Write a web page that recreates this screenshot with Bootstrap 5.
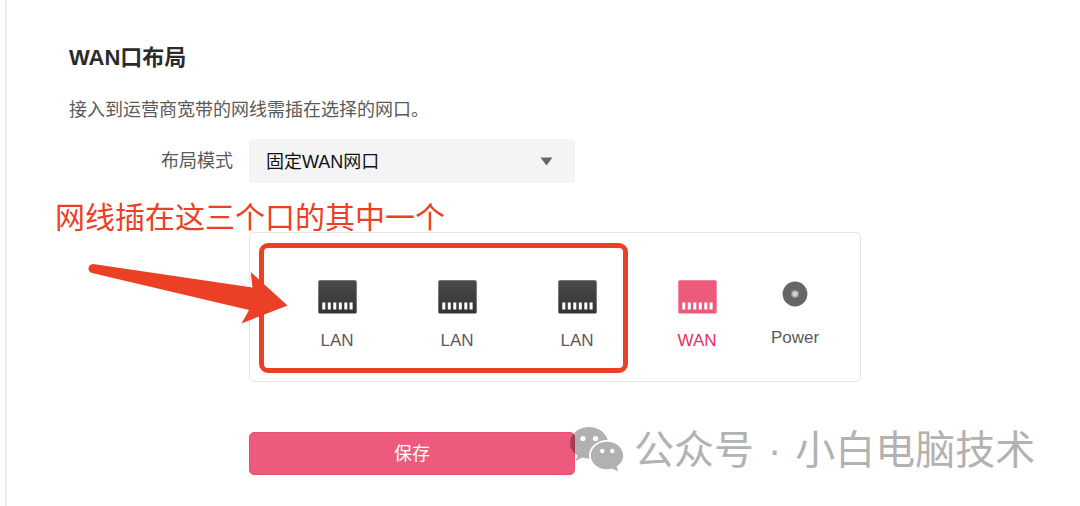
<!DOCTYPE html>
<html lang="zh-CN">
<head>
<meta charset="utf-8">
<meta name="viewport" content="width=device-width, initial-scale=1">
<title>WAN口布局</title>
<link href="https://cdn.jsdelivr.net/npm/bootstrap@5.3.0/dist/css/bootstrap.min.css" rel="stylesheet">
<style>
  body { font-family: "Liberation Sans", "Noto Sans CJK SC", sans-serif; font-size: 18px; line-height: 26px; color: #5a5a5a; background: #fff; }
  .settings { margin-left: 5px; border-left: 2px solid #ededed; padding: 45px 16px 24px 62px; }
  .settings-title { font-size: 22px; line-height: 26px; color: #2b2b2b; margin-bottom: 26px; }
  .settings-hint { margin-bottom: 16px; }
  .field-label { width: 180px; padding-right: 16px; }
  .field-box { width: 326px; }
  .mode-select, .mode-select:focus { appearance: none; height: 44px; padding: 1px 40px 0 17px; font-size: 18px; line-height: 26px; color: #111; background: #f4f4f4; border: 0; border-radius: 4px; }
  .select-caret { right: 22px; top: 18px; }
  .field-body { margin-left: 180px; }
  .port-panel { max-width: 612px; height: 150px; margin-top: 49px; padding: 47px 0 0 27px; border: 1px solid #e4e4e4; border-radius: 5px; }
  .port { width: 120px; font-size: 17px; gap: 14px; }
  .port-wan { color: #e8305f; }
  .port-power { width: 76px; gap: 18px; }
  .save-row { margin-top: 50px; }
  .btn-save, .btn-save:hover { height: 43px; padding: 0; font-size: 18px; line-height: 26px; color: #fff; background: #ec5b7b; border: 1px solid #ea4f73; border-radius: 5px; }
  .note-text { left: -195px; top: -37px; font-size: 30px; line-height: 44px; color: #eb4025; }
  .note-frame { left: 9px; top: 10px; width: 369px; height: 130px; border: 5px solid #eb4025; border-radius: 9px; }
  .note-arrow { left: -163px; top: 28px; }
  .watermark { left: 320px; top: -14px; font-size: 40px; line-height: 60px; color: #b2b2b2; gap: 9px; }
  .watermark-text { gap: 14px; padding-top: 2px; }
</style>
</head>
<body>
<svg width="0" height="0" class="position-absolute" aria-hidden="true">
  <defs>
    <linearGradient id="dark" x1="0" y1="0" x2="0" y2="1"><stop offset="0" stop-color="#4b4b4b"/><stop offset="1" stop-color="#333"/></linearGradient>
    <symbol id="jack" viewBox="0 0 39 34">
      <rect x=".3" y=".3" width="38.4" height="33.2" rx="1.5"/>
      <path fill="#fff" d="M4.300 22.500h3v7h-3zM9.800 22.500h3v7h-3zM15.300 22.500h3v7h-3zM20.800 22.500h3v7h-3zM26.300 22.500h3v7h-3zM31.600 22.500h3v7h-3z"/>
    </symbol>
  </defs>
</svg>
<main class="settings min-vh-100">
  <h1 class="settings-title fw-bold">WAN口布局</h1>
  <p class="settings-hint">接入到运营商宽带的网线需插在选择的网口。</p>
  <form>
    <div class="d-flex align-items-center">
      <label class="field-label text-end flex-shrink-0" for="mode">布局模式</label>
      <div class="field-box position-relative">
        <select id="mode" class="mode-select d-block w-100"><option>固定WAN网口</option></select>
        <svg class="select-caret position-absolute pe-none" width="13" height="9"><path d="M.5.5h12l-6 8z" fill="#666"/></svg>
      </div>
    </div>
    <div class="field-body">
      <div class="port-panel position-relative d-flex align-items-start">
        <div class="port d-flex flex-column align-items-center"><svg width="39" height="34" fill="url(#dark)"><use href="#jack"/></svg><span>LAN</span></div>
        <div class="port d-flex flex-column align-items-center"><svg width="39" height="34" fill="url(#dark)"><use href="#jack"/></svg><span>LAN</span></div>
        <div class="port d-flex flex-column align-items-center"><svg width="39" height="34" fill="url(#dark)"><use href="#jack"/></svg><span>LAN</span></div>
        <div class="port port-wan d-flex flex-column align-items-center"><svg width="39" height="34" fill="#ec5b7b"><use href="#jack"/></svg><span>WAN</span></div>
        <div class="port port-power d-flex flex-column align-items-center"><svg width="26" height="27"><circle cx="13" cy="14" r="12.4" fill="#666"/><circle cx="13" cy="14" r="4" fill="#929292"/><circle cx="13" cy="14" r="2.7" fill="#d0d0d0"/></svg><span>Power</span></div>
        <div class="note-frame position-absolute pe-none"></div>
        <svg class="note-arrow position-absolute pe-none" width="204" height="66" viewBox="0 0 204 66"><path fill="#eb4025" d="M6 3 165.500 26.500 163.700 11 200.500 44.500 154.500 62.500 162 49 5 12Q1 10.500 1.500 7T6 3Z"/></svg>
        <div class="note-text position-absolute text-nowrap">网线插在这三个口的其中一个</div>
      </div>
      <div class="save-row position-relative">
        <div class="field-box"><button type="button" class="btn btn-save d-block w-100">保存</button></div>
        <div class="watermark position-absolute d-flex align-items-center text-nowrap pe-none">
          <svg width="56" height="48" viewBox="0 0 56 48">
            <mask id="cut"><rect width="56" height="48" fill="#fff"/><ellipse cx="38" cy="30.500" rx="18" ry="15.500"/><circle cx="14" cy="13.500" r="2.600"/><circle cx="26.500" cy="13.500" r="2.600"/></mask>
            <g fill="#000" opacity=".3">
              <path mask="url(#cut)" d="M20 2C9.500 2 1 9 1 18c0 5.500 3 9.500 7.500 12.500L6.500 36l7-3.500c2 .7 4.500 1 6.500 1 10.500 0 19-7 19-15.500S30.500 2 20 2Z"/>
              <path fill-rule="evenodd" d="M38 16.700c-9 0-16.200 6.100-16.200 13.800S29 44.300 38 44.300c2 0 3.800-.3 5.500-.8l5.500 3-1.300-5.200c4-2.700 6.500-6.300 6.500-10.800 0-7.700-7.200-13.800-16.200-13.800ZM33.300 23.800a2.200 2.200 0 1 1 0 4.400 2.200 2.200 0 0 1 0-4.400ZM43.300 23.800a2.200 2.200 0 1 1 0 4.400 2.200 2.200 0 0 1 0-4.400Z"/>
            </g>
          </svg>
          <div class="watermark-text d-flex"><span>公众号</span><span>·</span><span>小白电脑技术</span></div>
        </div>
      </div>
    </div>
  </form>
</main>
<script src="https://cdn.jsdelivr.net/npm/bootstrap@5.3.0/dist/js/bootstrap.bundle.min.js"></script>
</body>
</html>
